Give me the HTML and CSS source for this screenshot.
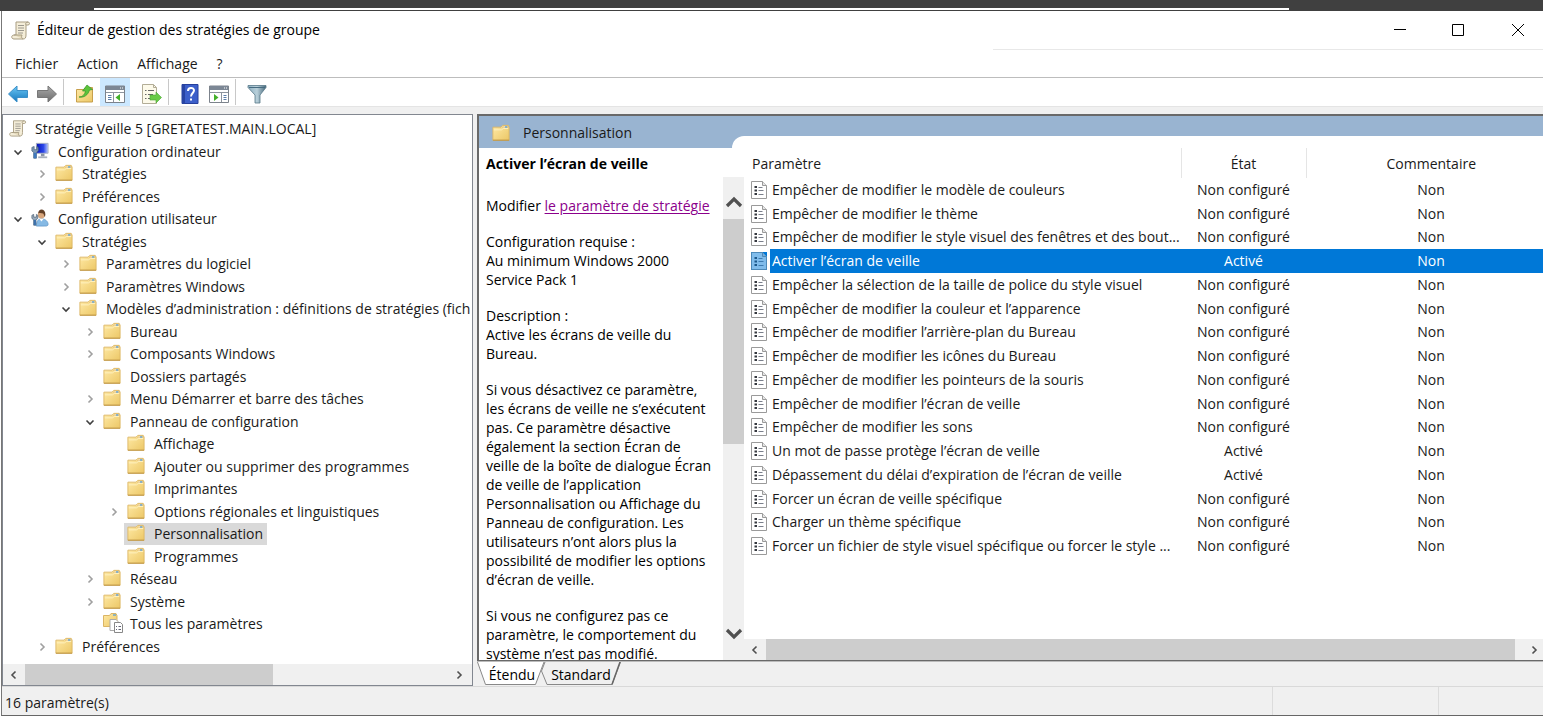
FILE: index.html
```html
<!DOCTYPE html>
<html lang="fr">
<head>
<meta charset="utf-8">
<title>Éditeur de gestion des stratégies de groupe</title>
<link rel="stylesheet" href="styles.css">
</head>
<body>
<svg class="defs" aria-hidden="true">
  <defs>
    <linearGradient id="gold" x1="0" y1="0" x2="1" y2="1"><stop offset="0" stop-color="#ffeaa6"/><stop offset="1" stop-color="#ecc766"/></linearGradient>
    <linearGradient id="blue" x1="0" y1="0" x2="0" y2="1"><stop offset="0" stop-color="#6cc8f5"/><stop offset="1" stop-color="#1577bd"/></linearGradient>
    <linearGradient id="grey" x1="0" y1="0" x2="0" y2="1"><stop offset="0" stop-color="#aaa"/><stop offset="1" stop-color="#6c6c6c"/></linearGradient>
    <linearGradient id="screen" x1="0" y1="0" x2="1" y2="0"><stop offset="0" stop-color="#0714b8"/><stop offset=".6" stop-color="#2b46e8"/><stop offset="1" stop-color="#b8c8ff"/></linearGradient>
    <linearGradient id="steel" x1="0" y1="0" x2="1" y2="0"><stop offset="0" stop-color="#8fb0c2"/><stop offset=".5" stop-color="#b9d0da"/><stop offset="1" stop-color="#48697c"/></linearGradient>
  </defs>
  <symbol id="i-scroll" viewBox="0 0 20 20">
    <path d="M5 2h12c2 0 2 3 0 3h-2v10c0 3-1 4-3 4H3c-3 0-3-4 0-4h2z" fill="#f4edd8" stroke="#a89d82"/>
    <path d="M3 15h8c-1 2 0 4 1 4" fill="#e3d8b9" stroke="#a89d82"/>
    <path d="M15 5c-1-1 0-3 2-3" fill="none" stroke="#a89d82"/>
    <path d="M7 5.500h6M7 8h6M7 10.500h6M7 13h5" stroke="#9c998f"/>
  </symbol>
  <symbol id="i-folder" viewBox="0 0 20 20">
    <path d="M1 3.500h9l2-2h6l1 2v14.500h-18z" fill="url(#gold)" stroke="#dcb765"/>
    <path d="M11.500 4l1.500-1.500h4.500V4z" fill="#fff" stroke="#dfb566" stroke-width=".6"/>
    <path d="M14.500 3.300h2.500" stroke="#4a9bdc" stroke-width="1.400"/>
    <path d="M2 6.500h8.500l2-1.500h5.500" fill="none" stroke="#fff3c4"/>
    <path d="M1 18h18" stroke="#ba913f"/>
  </symbol>
  <symbol id="i-folder-pages" viewBox="0 0 20 20">
    <path d="M.500 2.500h6l1.500-2h5l1 2v11H.500z" fill="url(#gold)" stroke="#dbb565"/>
    <path d="M10 2h3" stroke="#4a9bdc" stroke-width="1.200"/>
    <path d="M7 6.500h6l2 2v9H7z" fill="#fff" stroke="#aaa"/>
    <path d="M11.500 9.500h6l2 2v8h-8z" fill="#fff" stroke="#888"/>
    <path d="M13 13.500h1M15.500 13.500h2.500M13 16.500h1M15.500 16.500h2.500" stroke="#667"/>
  </symbol>
  <symbol id="i-computer" viewBox="0 0 20 20">
    <path d="M6 1.500h13v11H6z" fill="url(#screen)" stroke="#a9b0bd"/>
    <path d="M11 13h4v3h-4z" fill="#8b95a5"/><path d="M8 16h10v2H8z" fill="#a8b0bb"/>
    <path d="M1 6v4l2 1.500V18h3v-6.500L8 10V6L6.500 5v3.500h-3V5z" fill="#7d98b5" stroke="#49617c" stroke-width=".8"/>
    <path d="M3 12h3v6H3z" fill="#3f79bd"/>
  </symbol>
  <symbol id="i-user" viewBox="0 0 20 20">
    <path d="M6 19c0-6 2-8 6-8s7 3 7 6c0 2-2 2-4 2z" fill="#85b9e4" stroke="#5b92c4" stroke-width=".8"/>
    <path d="M9.500 11l2 3 2.500-3z" fill="#fff"/>
    <circle cx="11.500" cy="6.500" r="4" fill="#d8a67c"/>
    <path d="M8 5c0-6 8-6 8 1l-.500 3c-1-1-1-3-2-4C12 4.500 9 4 8 5z" fill="#634128"/>
    <path d="M1 7v3.500L3 12v6h2.500v-6l2-1.500V7L6 6v3H3V6z" fill="#9bacbd" stroke="#4c6175" stroke-width=".8"/>
    <path d="M3 12h2.500v6H3z" fill="#3c71ac"/>
  </symbol>
  <symbol id="i-policy" viewBox="0 0 16 18">
    <path d="M.500 .500h11l4 4v13H.500z" fill="#fff" stroke="#9a9a9a"/>
    <path d="M11.500 .500v4h4" fill="#e6e6e6" stroke="#9a9a9a"/>
    <path d="M3.500 6h2.500M3.500 9.500h2.500M3.500 13h2.500" stroke="#35383f" stroke-width="2"/>
    <path d="M7.500 6.500h4M7.500 9.500h5M7.500 13.500h5" stroke="#7a7f8b"/>
  </symbol>
  <symbol id="i-left" viewBox="0 0 20 20"><path d="M.500 10L9 2v4.500h10.500v7H9V18z" fill="url(#blue)" stroke="#3b8fc8"/></symbol>
  <symbol id="i-right" viewBox="0 0 20 20"><path d="M19.500 10L11 2v4.500H.500v7H11V18z" fill="url(#grey)" stroke="#777"/></symbol>
  <symbol id="i-up" viewBox="0 0 20 20">
    <path d="M1.500 5.500h7l2-2h7v14.500h-16z" fill="url(#gold)" stroke="#c79f4b"/>
    <path d="M4 13c4 0 6-3 6.500-6H7.500L12 1l5.500 4.500-3 .500C13 11 9 14 4 13z" fill="#5cc43b" stroke="#36932a" stroke-width=".7"/>
  </symbol>
  <symbol id="i-pane-left" viewBox="0 0 20 20">
    <path d="M.500 2h19v16.500H.500z" fill="#fff" stroke="#7c838c"/><path d="M1 2h18v4H1z" fill="#7c8795"/>
    <path d="M15 4h1M17 4h1" stroke="#fff"/>
    <path d="M1 8.500h18M8.500 9v9" stroke="#8d949e"/><path d="M3 11.500h3.500M3 13.500h3.500M3 15.500h3.500" stroke="#5b7da8"/>
    <path d="M15 10v7l-4.500-3.500z" fill="#43b02a"/>
  </symbol>
  <symbol id="i-pane-right" viewBox="0 0 20 20">
    <path d="M.500 2h19v16.500H.500z" fill="#fff" stroke="#7c838c"/><path d="M1 2h18v4H1z" fill="#7c8795"/>
    <path d="M15 4h1M17 4h1" stroke="#fff"/>
    <path d="M1 8.500h18M12.500 9v9" stroke="#8d949e"/><path d="M14.500 11.500h3M14.500 13.500h3M14.500 15.500h3" stroke="#5b7da8"/>
    <path d="M5 10v7l4.500-3.500z" fill="#43b02a"/>
  </symbol>
  <symbol id="i-export" viewBox="0 0 20 20">
    <path d="M.500 .500h11l3 3v16H.500z" fill="#fdfaea" stroke="#b3ad97"/><path d="M11.500 .500v3h3" fill="none" stroke="#b3ad97"/>
    <path d="M3 6.500h1.500M6 6.500h6M3 10.500h1.500M6 10.500h5M3 14.500h1.500M6 14.500h5" stroke="#676767"/>
    <path d="M8 11h6V8l5.500 5.500L14 19v-3H8z" fill="#68cb45" stroke="#4aa535" stroke-width=".6"/>
  </symbol>
  <symbol id="i-help" viewBox="0 0 20 20">
    <path d="M2 .500h16v19H2z" fill="#3c5fca" stroke="#26409c"/><path d="M2 .500h3v19H2z" fill="#2844a4"/>
    <path d="M8 7c0-4 6-4 6-.500 0 2.500-3 2.500-3 6" fill="none" stroke="#fff" stroke-width="2"/><path d="M10 14.500h2v2h-2z" fill="#fff"/>
  </symbol>
  <symbol id="i-filter" viewBox="0 0 20 20">
    <path d="M1 1.500h18v2L13 11v8H8v-8L1 3.500z" fill="url(#steel)" stroke="#587889" stroke-width=".8"/>
    <path d="M2 3.500h16" stroke="#466b80"/>
  </symbol>
  <symbol id="c-right" viewBox="0 0 10 10"><path d="M3.500 1.500L7 5 3.500 8.500" fill="none" stroke="currentColor" stroke-width="1.600"/></symbol>
  <symbol id="c-left" viewBox="0 0 10 10"><path d="M6.500 1.500L3 5l3.500 3.500" fill="none" stroke="currentColor" stroke-width="1.600"/></symbol>
  <symbol id="c-down" viewBox="0 0 10 10"><path d="M1.500 3.500L5 7l3.500-3.500" fill="none" stroke="currentColor" stroke-width="1.600"/></symbol>
  <symbol id="c-up" viewBox="0 0 10 10"><path d="M1.500 6.500L5 3l3.500 3.500" fill="none" stroke="currentColor" stroke-width="1.600"/></symbol>
</svg>

<div class="backdrop"><div class="backdrop-line"></div></div>
<div class="window">
  <header class="titlebar">
    <svg class="icon"><use href="#i-scroll"/></svg>
    <h1>Éditeur de gestion des stratégies de groupe</h1>
    <div class="caption">
      <button aria-label="Réduire"><svg viewBox="0 0 12 12"><path d="M0 5.500h12" stroke="#000"/></svg></button>
      <button aria-label="Agrandir"><svg viewBox="0 0 12 12"><path d="M.500 .500h11v11H.500z" fill="none" stroke="#000"/></svg></button>
      <button aria-label="Fermer"><svg viewBox="0 0 12 12"><path d="M0 0l12 12M12 0L0 12" stroke="#000"/></svg></button>
    </div>
  </header>
  <nav class="menubar">
    <button>Fichier</button><button>Action</button><button>Affichage</button><button>?</button>
    <span class="menubar-edge"></span>
  </nav>
  <div class="toolbar">
    <button aria-label="Précédent"><svg class="icon"><use href="#i-left"/></svg></button>
    <button aria-label="Suivant"><svg class="icon"><use href="#i-right"/></svg></button>
    <span class="sep"></span>
    <button aria-label="Dossier parent"><svg class="icon"><use href="#i-up"/></svg></button>
    <button class="pressed" aria-pressed="true" aria-label="Arborescence"><svg class="icon"><use href="#i-pane-left"/></svg></button>
    <button class="apart" aria-label="Exporter la liste"><svg class="icon"><use href="#i-export"/></svg></button>
    <span class="sep"></span>
    <button aria-label="Aide"><svg class="icon"><use href="#i-help"/></svg></button>
    <button aria-label="Volet Actions"><svg class="icon"><use href="#i-pane-right"/></svg></button>
    <span class="sep"></span>
    <button aria-label="Filtre"><svg class="icon"><use href="#i-filter"/></svg></button>
  </div>

  <main class="workspace">
    <section class="tree-pane">
      <ul class="tree" role="tree">
        <li class="root" role="treeitem"><svg class="icon"><use href="#i-scroll"/></svg><span>Stratégie Veille 5 [GRETATEST.MAIN.LOCAL]</span></li>
        <li class="l1 open" role="treeitem"><svg class="chev"><use href="#c-down"/></svg><svg class="icon"><use href="#i-computer"/></svg><span>Configuration ordinateur</span></li>
        <li class="l2" role="treeitem"><svg class="chev"><use href="#c-right"/></svg><svg class="icon"><use href="#i-folder"/></svg><span>Stratégies</span></li>
        <li class="l2" role="treeitem"><svg class="chev"><use href="#c-right"/></svg><svg class="icon"><use href="#i-folder"/></svg><span>Préférences</span></li>
        <li class="l1 open" role="treeitem"><svg class="chev"><use href="#c-down"/></svg><svg class="icon"><use href="#i-user"/></svg><span>Configuration utilisateur</span></li>
        <li class="l2 open" role="treeitem"><svg class="chev"><use href="#c-down"/></svg><svg class="icon"><use href="#i-folder"/></svg><span>Stratégies</span></li>
        <li class="l3" role="treeitem"><svg class="chev"><use href="#c-right"/></svg><svg class="icon"><use href="#i-folder"/></svg><span>Paramètres du logiciel</span></li>
        <li class="l3" role="treeitem"><svg class="chev"><use href="#c-right"/></svg><svg class="icon"><use href="#i-folder"/></svg><span>Paramètres Windows</span></li>
        <li class="l3 open" role="treeitem"><svg class="chev"><use href="#c-down"/></svg><svg class="icon"><use href="#i-folder"/></svg><span>Modèles d’administration : définitions de stratégies (fich</span></li>
        <li class="l4" role="treeitem"><svg class="chev"><use href="#c-right"/></svg><svg class="icon"><use href="#i-folder"/></svg><span>Bureau</span></li>
        <li class="l4" role="treeitem"><svg class="chev"><use href="#c-right"/></svg><svg class="icon"><use href="#i-folder"/></svg><span>Composants Windows</span></li>
        <li class="l4" role="treeitem"><svg class="chev"></svg><svg class="icon"><use href="#i-folder"/></svg><span>Dossiers partagés</span></li>
        <li class="l4" role="treeitem"><svg class="chev"><use href="#c-right"/></svg><svg class="icon"><use href="#i-folder"/></svg><span>Menu Démarrer et barre des tâches</span></li>
        <li class="l4 open" role="treeitem"><svg class="chev"><use href="#c-down"/></svg><svg class="icon"><use href="#i-folder"/></svg><span>Panneau de configuration</span></li>
        <li class="l5" role="treeitem"><svg class="chev"></svg><svg class="icon"><use href="#i-folder"/></svg><span>Affichage</span></li>
        <li class="l5" role="treeitem"><svg class="chev"></svg><svg class="icon"><use href="#i-folder"/></svg><span>Ajouter ou supprimer des programmes</span></li>
        <li class="l5" role="treeitem"><svg class="chev"></svg><svg class="icon"><use href="#i-folder"/></svg><span>Imprimantes</span></li>
        <li class="l5" role="treeitem"><svg class="chev"><use href="#c-right"/></svg><svg class="icon"><use href="#i-folder"/></svg><span>Options régionales et linguistiques</span></li>
        <li class="l5 current" role="treeitem" aria-selected="true"><svg class="chev"></svg><div class="mark"><svg class="icon"><use href="#i-folder"/></svg><span>Personnalisation</span></div></li>
        <li class="l5" role="treeitem"><svg class="chev"></svg><svg class="icon"><use href="#i-folder"/></svg><span>Programmes</span></li>
        <li class="l4" role="treeitem"><svg class="chev"><use href="#c-right"/></svg><svg class="icon"><use href="#i-folder"/></svg><span>Réseau</span></li>
        <li class="l4" role="treeitem"><svg class="chev"><use href="#c-right"/></svg><svg class="icon"><use href="#i-folder"/></svg><span>Système</span></li>
        <li class="l4" role="treeitem"><svg class="chev"></svg><svg class="icon pages"><use href="#i-folder-pages"/></svg><span>Tous les paramètres</span></li>
        <li class="l2" role="treeitem"><svg class="chev"><use href="#c-right"/></svg><svg class="icon"><use href="#i-folder"/></svg><span>Préférences</span></li>
      </ul>
      <div class="hscroll">
        <button aria-label="Défiler à gauche"><svg><use href="#c-left"/></svg></button>
        <div class="track"><div class="thumb tree-thumb"></div></div>
        <button class="tree-end" aria-label="Défiler à droite"><svg><use href="#c-right"/></svg></button>
      </div>
    </section>

    <section class="result-pane">
      <div class="view">
        <div class="band">
          <h2><svg class="icon"><use href="#i-folder"/></svg>Personnalisation</h2>
          <div class="band-cap"></div>
        </div>
        <div class="columns">
          <article class="detail">
            <h3>Activer l’écran de veille</h3>
            <div class="detail-body">
              <div class="detail-text">
                <p>Modifier <a href="#">le paramètre de stratégie</a></p>
                <p>Configuration requise :<br>Au minimum Windows 2000<br>Service Pack 1</p>
                <p>Description :<br>Active les écrans de veille du<br>Bureau.</p>
                <p>Si vous désactivez ce paramètre,<br>les écrans de veille ne s’exécutent<br>pas. Ce paramètre désactive<br>également la section Écran de<br>veille de la boîte de dialogue Écran<br>de veille de l’application<br>Personnalisation ou Affichage du<br>Panneau de configuration. Les<br>utilisateurs n’ont alors plus la<br>possibilité de modifier les options<br>d’écran de veille.</p>
                <p>Si vous ne configurez pas ce<br>paramètre, le comportement du<br>système n’est pas modifié.</p>
              </div>
              <div class="vscroll">
                <button aria-label="Défiler vers le haut"><svg><use href="#c-up"/></svg></button>
                <div class="vtrack"><div class="vthumb"></div></div>
                <button aria-label="Défiler vers le bas"><svg><use href="#c-down"/></svg></button>
              </div>
            </div>
          </article>
          <div class="list">
            <div class="list-body">
              <table>
                <colgroup><col class="c-icon"><col class="c-name"><col class="c-state"><col></colgroup>
                <thead><tr><th colspan="2" scope="col">Paramètre</th><th scope="col">État</th><th scope="col">Commentaire</th></tr></thead>
                <tbody>
                  <tr><td><svg><use href="#i-policy"/></svg></td><td>Empêcher de modifier le modèle de couleurs</td><td>Non configuré</td><td>Non</td></tr>
                  <tr><td><svg><use href="#i-policy"/></svg></td><td>Empêcher de modifier le thème</td><td>Non configuré</td><td>Non</td></tr>
                  <tr><td><svg><use href="#i-policy"/></svg></td><td>Empêcher de modifier le style visuel des fenêtres et des bout...</td><td>Non configuré</td><td>Non</td></tr>
                  <tr class="selected"><td><svg><use href="#i-policy"/></svg></td><td>Activer l’écran de veille</td><td>Activé</td><td>Non</td></tr>
                  <tr><td><svg><use href="#i-policy"/></svg></td><td>Empêcher la sélection de la taille de police du style visuel</td><td>Non configuré</td><td>Non</td></tr>
                  <tr><td><svg><use href="#i-policy"/></svg></td><td>Empêcher de modifier la couleur et l’apparence</td><td>Non configuré</td><td>Non</td></tr>
                  <tr><td><svg><use href="#i-policy"/></svg></td><td>Empêcher de modifier l’arrière-plan du Bureau</td><td>Non configuré</td><td>Non</td></tr>
                  <tr><td><svg><use href="#i-policy"/></svg></td><td>Empêcher de modifier les icônes du Bureau</td><td>Non configuré</td><td>Non</td></tr>
                  <tr><td><svg><use href="#i-policy"/></svg></td><td>Empêcher de modifier les pointeurs de la souris</td><td>Non configuré</td><td>Non</td></tr>
                  <tr><td><svg><use href="#i-policy"/></svg></td><td>Empêcher de modifier l’écran de veille</td><td>Non configuré</td><td>Non</td></tr>
                  <tr><td><svg><use href="#i-policy"/></svg></td><td>Empêcher de modifier les sons</td><td>Non configuré</td><td>Non</td></tr>
                  <tr><td><svg><use href="#i-policy"/></svg></td><td>Un mot de passe protège l’écran de veille</td><td>Activé</td><td>Non</td></tr>
                  <tr><td><svg><use href="#i-policy"/></svg></td><td>Dépassement du délai d’expiration de l’écran de veille</td><td>Activé</td><td>Non</td></tr>
                  <tr><td><svg><use href="#i-policy"/></svg></td><td>Forcer un écran de veille spécifique</td><td>Non configuré</td><td>Non</td></tr>
                  <tr><td><svg><use href="#i-policy"/></svg></td><td>Charger un thème spécifique</td><td>Non configuré</td><td>Non</td></tr>
                  <tr><td><svg><use href="#i-policy"/></svg></td><td>Forcer un fichier de style visuel spécifique ou forcer le style ...</td><td>Non configuré</td><td>Non</td></tr>
                </tbody>
              </table>
            </div>
            <div class="hscroll">
              <button aria-label="Défiler à gauche"><svg><use href="#c-left"/></svg></button>
              <div class="track"><div class="thumb"></div></div>
              <button class="wide" aria-label="Défiler à droite"><svg><use href="#c-right"/></svg></button>
            </div>
          </div>
        </div>
      </div>
      <div class="tabs" role="tablist">
        <button class="tab active" role="tab" aria-selected="true"><svg viewBox="0 0 68 24" preserveAspectRatio="none"><path d="M.500 0l8 22.500h50L67 0" fill="#fff" stroke="#888"/></svg><span>Étendu</span></button>
        <button class="tab second" role="tab"><svg viewBox="0 0 80 24" preserveAspectRatio="none"><path d="M4 0L.500 9l5.500 13.500h65L79.500 0" fill="#f0f0f0" stroke="#888"/><path d="M71 22.500L79 0" stroke="#666" stroke-width="1.500"/></svg><span>Standard</span></button>
      </div>
    </section>
  </main>
  <footer class="status"><span>16 paramètre(s)</span><i></i><i></i></footer>
</div>
</body>
</html>
```
FILE: styles.css
```css
* { box-sizing: border-box; }

body {
  margin: 0;
  height: 100vh;
  display: flex;
  flex-direction: column;
  padding-bottom: 1px;
  overflow: hidden;
  background: #fff;
  color: #1a1a1a;
  font: 14px/20px "Open Sans", "Noto Sans", sans-serif;
}

h1, h2, h3, p, ul { margin: 0; padding: 0; font: inherit; }

button {
  border: 0;
  padding: 0;
  background: none;
  color: inherit;
  font: inherit;
}

.defs { position: absolute; width: 0; height: 0; }
.icon { width: 20px; height: 20px; flex: none; }

.backdrop { height: 11px; padding: 8px 254px 0 94px; background: #404040; }
.backdrop-line { height: 2px; background: #fff; }

.window {
  flex: 1;
  min-height: 0;
  display: flex;
  flex-direction: column;
  margin-left: 1px;
  border-left: 1px solid #777;
  border-bottom: 1px solid #666;
  background: #f0f0f0;
}

/* Title, menu and tool bars */
.titlebar {
  display: flex;
  align-items: center;
  height: 38px;
  padding-left: 9px;
  background: #fff;
  color: #000;
}
.titlebar h1 { margin-left: 6px; flex: 1; }
.caption { display: flex; }
.caption button {
  display: flex;
  align-items: center;
  justify-content: center;
  width: 58px;
  height: 38px;
}
.caption button:last-child { width: 56px; padding-left: 6px; }
.caption svg { width: 12px; height: 12px; }

.menubar {
  display: flex;
  gap: 19px;
  height: 29px;
  padding: 0 0 0 13px;
  background: #fff;
  border-bottom: 1px solid #bdbdbd;
}
.menubar button { height: 28px; padding-top: 2px; }
.menubar-edge { width: 550px; margin-left: auto; border-top: 1px solid #e8e8e8; }

.toolbar {
  display: flex;
  align-items: center;
  gap: 1px;
  height: 29px;
  padding-left: 2px;
  background: #fff;
  border-bottom: 1px solid #e4e4e4;
}
.toolbar button {
  display: flex;
  align-items: center;
  justify-content: center;
  width: 28px;
  height: 28px;
  padding-top: 3px;
}
.toolbar .pressed { width: 30px; background: #cce8ff; }
.toolbar .apart { margin-left: 7px; }
.sep { width: 1px; height: 26px; margin: 0 6px 0 1px; background: #c8c8c8; }

/* Work area */
.workspace {
  flex: 1;
  min-height: 0;
  display: flex;
  gap: 4px;
  padding-top: 7px;
  border-bottom: 1px solid #d9d9d9;
}

.tree-pane {
  width: 471px;
  flex: none;
  display: flex;
  flex-direction: column;
  border: 1px solid #828790;
  background: #fff;
}
.tree {
  flex: 1;
  min-height: 0;
  display: grid;
  grid-auto-rows: 1fr;
  padding: 3px 2px 6px 6px;
  list-style: none;
}
.tree li { display: flex; align-items: center; min-width: 0; white-space: nowrap; }
.tree .icon { width: 18px; height: 18px; margin: 0 9px 2px 0; }
.tree .root .icon { margin-right: 8px; }
.tree .pages { width: 20px; height: 20px; margin-right: 7px; }
.tree .chev { width: 10px; height: 10px; flex: none; margin: 0 8px 0 1px; color: #a0a0a0; }
.tree .open .chev { color: #404040; }
.l1 { padding-left: 3px; }
.l2 { padding-left: 27px; }
.l3 { padding-left: 51px; }
.l4 { padding-left: 75px; }
.l5 { padding-left: 99px; }
.mark {
  display: flex;
  align-items: center;
  height: 22px;
  margin-left: -3px;
  padding: 0 4px 0 3px;
  background: #d9d9d9;
}

.hscroll { display: flex; height: 21px; flex: none; background: #f0f0f0; }
.hscroll button {
  display: flex;
  align-items: center;
  justify-content: center;
  width: 22px;
  color: #505050;
}
.hscroll .wide { width: 28px; padding-left: 10px; }
.hscroll .tree-end { width: 26px; }
.hscroll svg { width: 10px; height: 10px; }
.track { flex: 1; }
.thumb { height: 100%; background: #cdcdcd; }
.tree-thumb { width: 59%; }

.result-pane { flex: 1; min-width: 0; display: flex; flex-direction: column; }
.view {
  flex: 1;
  min-height: 0;
  display: flex;
  flex-direction: column;
  border: 2px solid #696969;
  border-right: 0;
  border-bottom-width: 1px;
  background: #fff;
}
.band { display: flex; align-items: flex-end; height: 32px; flex: none; background: #99b4d1; }
.band h2 {
  display: flex;
  align-items: center;
  gap: 13px;
  width: 253px;
  height: 32px;
  padding: 1px 0 0 13px;
}
.band .icon { width: 18px; height: 18px; }
.band-cap { flex: 1; height: 12px; background: #fff; border-top-left-radius: 12px; }

.columns { flex: 1; min-height: 0; display: flex; }
.detail { width: 265px; flex: none; display: flex; flex-direction: column; color: #000; }
.detail h3 { height: 29px; padding: 6px 7px 0; font-weight: 700; }
.detail-body { flex: 1; min-height: 0; display: flex; }
.detail-text {
  flex: 1;
  min-width: 0;
  padding: 19px 0 0 7px;
  overflow: hidden;
  white-space: nowrap;
  line-height: 19px;
}
.detail-text p { margin-bottom: 17px; }
.detail-text a { color: #8b008b; text-underline-offset: 2px; }

.vscroll { display: flex; flex-direction: column; width: 21px; background: #f0f0f0; }
.vscroll button { height: 42px; padding-top: 10px; color: #505050; }
.vscroll button:last-child { height: 40px; padding: 0 0 14px; }
.vscroll svg { width: 20px; height: 20px; display: block; margin: 0 auto; }
.vtrack { flex: 1; }
.vthumb { height: 56%; background: #cdcdcd; }

.list { flex: 1; min-width: 0; display: flex; flex-direction: column; }
.list-body { flex: 1; min-height: 0; overflow: hidden; }
table { width: 100%; height: 410px; table-layout: fixed; border-collapse: collapse; }
.c-icon { width: 26px; }
.c-name { width: 411px; }
.c-state { width: 125px; }
thead tr { height: 30px; }
th, td { padding: 0; font-weight: 400; text-align: center; white-space: nowrap; }
th { padding-top: 2px; border-right: 1px solid #e5e5e5; }
th:first-child { padding-left: 8px; text-align: left; }
th:last-child { border-right: 0; }
th:last-child, td:last-child { padding-left: 13px; }
td:nth-child(1) { padding-left: 3px; }
td:nth-child(2) { padding-left: 2px; text-align: left; }
td svg { display: block; width: 16px; height: 18px; margin: 0 auto; }
.selected td:not(:first-child) { background: #0078d7; color: #fff; }
.selected svg { background: #0078d7; }
.selected use { opacity: .5; }

/* View tabs */
.tabs { display: flex; height: 25px; flex: none; border-top: 1px solid #bbb; }
.tab { position: relative; width: 68px; height: 24px; padding: 2px 0 0 2px; color: #000; }
.tab.second { width: 80px; margin-left: -4px; padding-left: 0; }
.tab.active { z-index: 1; }
.tab svg { position: absolute; inset: 0; width: 100%; height: 100%; }
.tab span { position: relative; }

.status {
  display: flex;
  align-items: stretch;
  height: 28px;
  flex: none;
  padding-left: 3px;
}
.status span { flex: 1; padding-top: 6px; }
.status i { width: 166px; border-left: 1px solid #dcdcdc; }
.status i:last-child { width: 105px; }
```
